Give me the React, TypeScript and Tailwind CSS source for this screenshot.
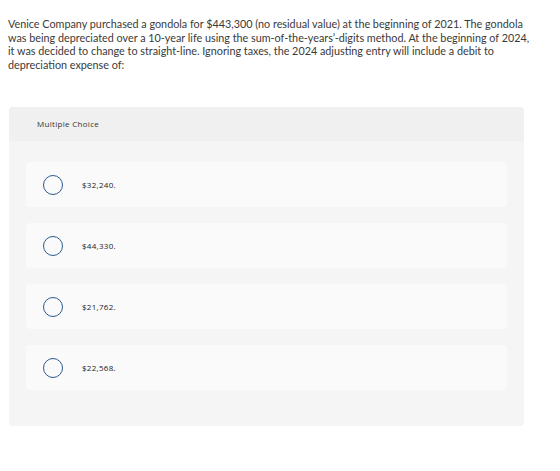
const options = ["$32,240.", "$44,330.", "$21,762.", "$22,568."]

const lines = [
  "Venice Company purchased a gondola for $443,300 (no residual value) at the beginning of 2021. The gondola",
  "was being depreciated over a 10-year life using the sum-of-the-years’-digits method. At the beginning of 2024,",
  "it was decided to change to straight-line. Ignoring taxes, the 2024 adjusting entry will include a debit to",
  "depreciation expense of:",
]

export default function App() {
  return (
    <div className="w-[560px] h-[471px] bg-white pt-[17px]">
      <p
        className="px-2 text-[10.8px] leading-[13.5px] text-[#3a3a3a]"
        style={{ fontFamily: "Lato, 'Noto Sans', sans-serif" }}
      >
        {lines.map((l) => (
          <span key={l} className="block whitespace-nowrap">
            {l}
          </span>
        ))}
      </p>

      <div
        className="mt-[36px] ml-[9px] w-[515px] rounded-sm bg-[#f5f5f5] overflow-hidden"
        style={{ fontFamily: "'Open Sans', sans-serif" }}
      >
        <div className="h-[34px] bg-[#f0f0f0] pl-[28px] flex items-center text-[8px] tracking-[0.3px] text-[#333]">
          Multiple Choice
        </div>
        <div className="px-[17px] pt-[21px] pb-[36px] flex flex-col gap-4">
          {options.map((o) => (
            <div key={o} className="h-[45px] bg-[#fafafa] rounded-sm flex items-center pl-[17px]">
              <div className="w-[20px] h-[20px] rounded-full border-[1.5px] border-[#2d5b8e]" />
              <span className="ml-[19px] text-[8px] tracking-[0.3px] text-[#222]">{o}</span>
            </div>
          ))}
        </div>
      </div>
    </div>
  )
}
